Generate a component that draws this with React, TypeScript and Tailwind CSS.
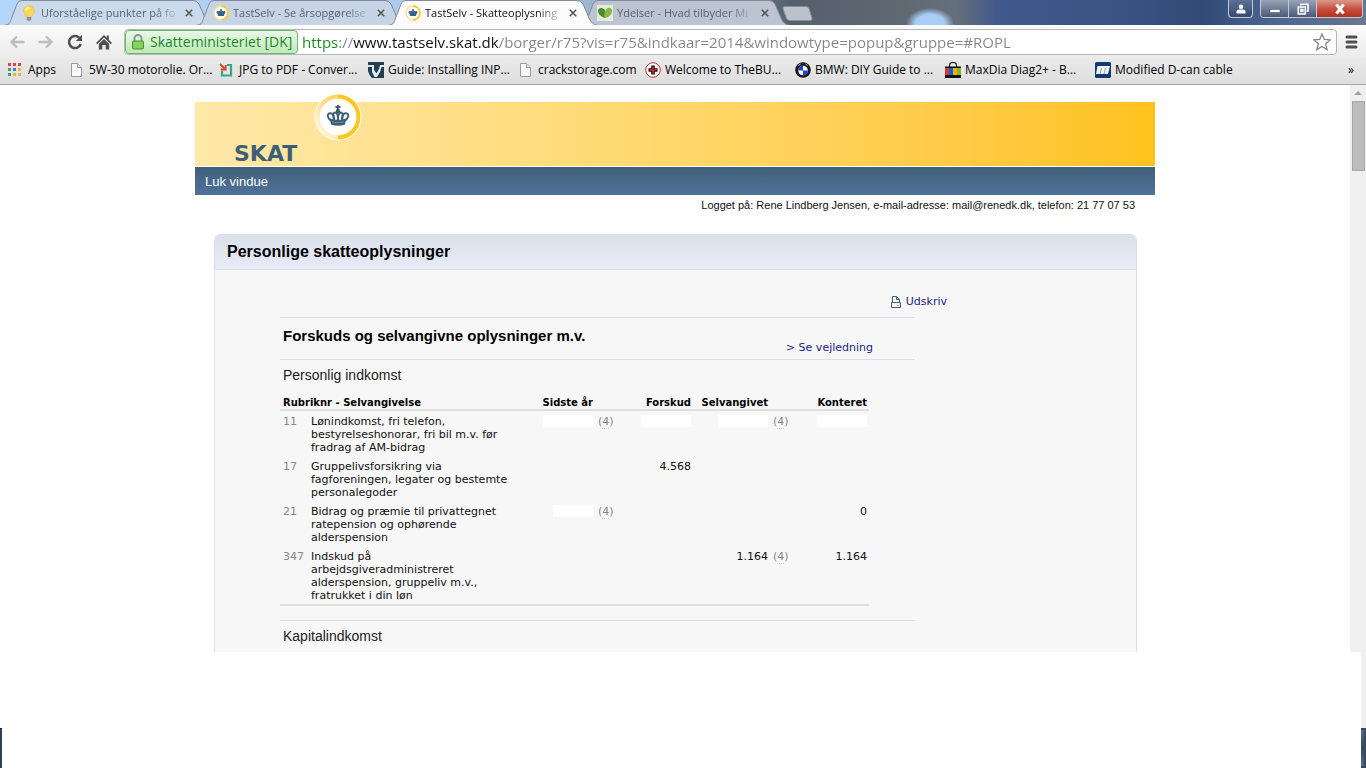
import type { ReactNode } from "react";
import clsx from "clsx";

function CrownIcon({ className }: { className?: string }) {
  return (
    <svg viewBox="0 0 24 21" className={className} fill="none" stroke="#3d5f78">
      <path d="M12 0v5M9.500 2h5" strokeWidth="1.800" />
      <circle cx="12" cy="6" r="2.200" fill="#3d5f78" stroke="none" />
      <path d="M5 16C1.500 13 .3 8.600 4 8.200c2.600-.2 4 2.300 3.800 6.300M19 16c3.500-3 4.700-7.400 1-7.800-2.600-.2-4 2.300-3.800 6.300" strokeWidth="1.900" />
      <path d="M8.200 15C6.800 11 7 7.500 9.300 7.500 11.200 7.500 12 10 12 15M15.800 15c1.400-4 1.200-7.500-1.100-7.500C12.800 7.500 12 10 12 15" strokeWidth="1.900" />
      <path d="M4 13.500c5 1.800 11 1.800 16 0l-1 6c-4.500 1.700-9.500 1.700-14 0z" fill="#3d5f78" stroke="none" />
      <path d="M6 16.800c4 1.100 8 1.100 12 0" stroke="#8fa5b4" strokeWidth=".5" />
    </svg>
  );
}

function SkatFavicon() {
  return (
    <svg viewBox="0 0 16 16" className="size-4 shrink-0">
      <circle cx="8" cy="8" r="7.500" fill="#fff" />
      <path d="M8 1a7 7 0 0 1 0 14" fill="none" stroke="#f4cb30" strokeWidth="1.800" />
      <path d="M8 15A7 7 0 0 1 8 1" fill="none" stroke="#f7e294" strokeWidth="1.400" />
      <path d="M7.300 4h1.400v1.400L10 6.300l1.800-.3c1.100.8.700 2-.5 3.200L11 11H5l-.3-1.800C3.500 8 3.100 6.800 4.200 6l1.800.3 1.300-.9z" fill="#3a638a" />
    </svg>
  );
}

function BulbFavicon() {
  return (
    <svg viewBox="0 0 16 16" className="size-4 shrink-0">
      <path d="M8 .5a5.500 5.500 0 0 0-5.500 5.300c0 2.700 2.500 3.700 3 6.200h5c.5-2.500 3-3.500 3-6.200A5.500 5.500 0 0 0 8 .5z" fill="#fbd65a" stroke="#e7b93a" strokeWidth=".6" />
      <path d="M5 5.500c.3-1.800 1.300-2.800 3-3" stroke="#fff3c2" strokeWidth="1.800" fill="none" />
      <path d="M5.800 12h4.400v2.600L9 15.700H7l-1.200-1.100z" fill="#8c9299" />
    </svg>
  );
}

function LeafFavicon() {
  return (
    <svg viewBox="0 0 16 16" className="size-4 shrink-0">
      <path fill="#e6ecdc" d="M0 0h16v16H0z" />
      <path d="M1 5.500C1.500 2.500 5 2 7.500 4.500 10 7 9.500 10.500 8 13 4.500 12 .5 9 1 5.500z" fill="#4c8c2b" />
      <path d="M15 5.500C14.500 2 11 2 9 4.500 7 7 7 10.500 8 13c4-.8 7.500-4 7-7.500z" fill="#86b93e" />
    </svg>
  );
}

function DocIcon() {
  return (
    <svg viewBox="0 0 16 16" className="size-4 shrink-0">
      <path d="M2.500 1.500h6l4 4v9h-10z" fill="#fafafa" stroke="#9a9a9a" />
      <path d="M8.500 1.500v4h4" fill="#e6e6e6" stroke="#9a9a9a" />
    </svg>
  );
}

const appColors = ["#d9483b", "#d9483b", "#d9483b", "#35a265", "#3f7de0", "#e9b92c", "#35a265", "#e9b92c", "#e9b92c"];

function AppsIcon() {
  return (
    <svg viewBox="0 0 16 16" className="size-4 shrink-0">
      {appColors.map((color, i) => (
        <rect key={i} x={(i % 3) * 5} y={1 + Math.floor(i / 3) * 5} width="3" height="3" fill={color} />
      ))}
    </svg>
  );
}

function PdfIcon() {
  return (
    <svg viewBox="0 0 16 16" className="size-4 shrink-0" fill="none">
      <path d="M8 3h4v10.500H3V9" stroke="#3ba585" strokeWidth="2.200" />
      <path d="M1 2l5 5M6.700 3v4.500h-5" stroke="#d5452b" strokeWidth="1.800" />
    </svg>
  );
}

function InpIcon() {
  return (
    <svg viewBox="0 0 16 16" className="size-4 shrink-0">
      <path fill="#1e3f54" d="M0 0h16v16H0z" />
      <path d="M0 3h6v5l2.500 3.500L11 7l1-4h4v2h-2.500l-1.500 5-3 5H6.500L4 10V5H0z" fill="#e8eef1" />
      <path d="M0 9c1 3 2 5 4 7H0z" fill="#dfe6ea" />
    </svg>
  );
}

function CrossIcon() {
  return (
    <svg viewBox="0 0 16 16" className="size-4 shrink-0">
      <circle cx="8" cy="8" r="7.300" fill="#fff" stroke="#d02a30" />
      <path d="M8 3.500v9M3.500 8h9" stroke="#111" strokeWidth="3.600" />
      <path d="M8 4.500v7M4.500 8h7" stroke="#d3262c" strokeWidth="1.600" />
    </svg>
  );
}

function BmwIcon() {
  return (
    <svg viewBox="0 0 16 16" className="size-4 shrink-0">
      <circle cx="8" cy="8" r="7.800" fill="#16181c" />
      <circle cx="8" cy="8.500" r="4.800" fill="#fff" />
      <path d="M8 8.500V3.700a4.800 4.800 0 0 0-4.800 4.800zM8 8.500v4.800a4.800 4.800 0 0 0 4.800-4.800z" fill="#1c3fe0" />
      <path d="M3.500 3.500l2-1.500M10.500 2l2 1.500" stroke="#ddd" />
    </svg>
  );
}

function BagIcon() {
  return (
    <svg viewBox="0 0 16 16" className="size-4 shrink-0">
      <path d="M4.500 5V3.500a3.500 3 0 0 1 7 0V5" fill="none" stroke="#111" strokeWidth="1.200" />
      <path fill="#111" d="M0 4.500h16v11.500H0z" />
      <path fill="#e53238" d="M0 6h4v7H0z" />
      <path fill="#0064d2" d="M4 6h4v7H4z" />
      <path fill="#f5af02" d="M8 6h4v7H8z" />
      <path fill="#86b817" d="M12 6h4v7h-4z" />
    </svg>
  );
}

function CableIcon() {
  return (
    <svg viewBox="0 0 16 16" className="size-4 shrink-0">
      <rect width="16" height="16" rx="1.500" fill="#143a6b" />
      <path d="M2.500 4h12.500l-2 8H1z" fill="#eef2f6" />
      <path d="M6.500 6l-1.500 6M10.500 6l-1.500 6" stroke="#8fa2ba" />
    </svg>
  );
}

const tabs: { title: string; icon: ReactNode; tone: string; active?: boolean }[] = [
  { title: "Uforståelige punkter på fo", icon: <BulbFavicon />, tone: "fill-[#cbdaea]" },
  { title: "TastSelv - Se årsopgørelse", icon: <SkatFavicon />, tone: "fill-[#c6d4e6]" },
  { title: "TastSelv - Skatteoplysning", icon: <SkatFavicon />, tone: "fill-[#fbfbfb]", active: true },
  { title: "Ydelser - Hvad tilbyder Mi", icon: <LeafFavicon />, tone: "fill-[#bcc4d2]" },
];

const bookmarks = [
  { label: "Apps", icon: <AppsIcon />, width: "w-[61px]" },
  { label: "5W-30 motorolie. Or...", icon: <DocIcon />, width: "w-[150px]" },
  { label: "JPG to PDF - Conver...", icon: <PdfIcon />, width: "w-[149px]" },
  { label: "Guide: Installing INP...", icon: <InpIcon />, width: "w-[150px]" },
  { label: "crackstorage.com", icon: <DocIcon />, width: "w-[127px]" },
  { label: "Welcome to TheBU...", icon: <CrossIcon />, width: "w-[150px]" },
  { label: "BMW: DIY Guide to ...", icon: <BmwIcon />, width: "w-[150px]" },
  { label: "MaxDia Diag2+ - B...", icon: <BagIcon />, width: "w-[150px]" },
  { label: "Modified D-can cable", icon: <CableIcon />, width: "w-[150px]" },
];

function Tab({ tab }: { tab: (typeof tabs)[number] }) {
  return (
    <div className={clsx("relative -mr-4 h-[25px] w-[208px] shrink", tab.active && "z-10")}>
      <svg viewBox="0 0 208 25" preserveAspectRatio="none" className="absolute inset-0 size-full">
        <path
          d="M0 25C5 25 5 22 7 17L12 4Q13 .5 17 .5H188Q192 .5 194 4L200 18Q203 25 208 25"
          className={tab.tone}
          stroke="#7f8b9b"
        />
      </svg>
      <div className="relative flex h-full items-center pr-4 pl-4">
        <button
          type="button"
          className={clsx(
            "flex min-w-0 flex-1 items-center gap-1 text-[11px] leading-4",
            tab.active ? "text-[#111]" : "text-[#5a6270]"
          )}
        >
          {tab.icon}
          <span className="whitespace-nowrap [mask-image:linear-gradient(to_right,#000_85%,#0004)]">{tab.title}</span>
        </button>
        <button type="button" aria-label="Luk fane" className="flex size-4 items-center justify-center">
          <svg viewBox="0 0 8 8" className="size-2" stroke="#555" strokeWidth="1.600">
            <path d="M.8.8l6.400 6.400M7.200.8L.8 7.200" />
          </svg>
        </button>
      </div>
    </div>
  );
}

function WindowButtons() {
  return (
    <div className="ml-auto flex items-start gap-[7px] pr-[3px]">
      <button type="button" aria-label="Bruger" className="flex h-[18px] w-[25px] items-center justify-center rounded-b border border-t-0 border-[#c3cad6] bg-linear-to-b from-[#5f7095] to-[#35486f]">
        <svg viewBox="0 0 10 10" className="size-[10px]" fill="#fff">
          <circle cx="5" cy="2.800" r="2.300" />
          <path d="M.5 9.500V7.500Q.5 5.500 3 5.500h4q2.500 0 2.500 2v2z" />
        </svg>
      </button>
      <div className="flex h-[18px] overflow-hidden rounded-b border border-t-0 border-[#c3cad6]">
        <button type="button" aria-label="Minimer" className="flex w-7 items-center justify-center border-r border-[#c3cad6] bg-linear-to-b from-[#9aa4b8] to-[#4c5a78]">
          <svg viewBox="0 0 12 12" className="size-3">
            <path d="M1 6.500h10v3H1z" fill="#fff" stroke="#444f66" strokeWidth=".5" />
          </svg>
        </button>
        <button type="button" aria-label="Gendan" className="flex w-7 items-center justify-center border-r border-[#c3cad6] bg-linear-to-b from-[#9aa4b8] to-[#4c5a78]">
          <svg viewBox="0 0 12 12" className="size-3" fill="none" stroke="#fff" strokeWidth="1.600">
            <path d="M4 2.500V1.300h7V8H9.500" />
            <path d="M1.300 4h7v7h-7zM4 6.500h1.800v2H4z" />
          </svg>
        </button>
        <button type="button" aria-label="Luk" className="flex w-[45px] items-center justify-center bg-linear-to-b from-[#d9998e] via-[#c8513f] to-[#b3301c]">
          <svg viewBox="0 0 12 12" className="size-3" stroke="#fff" strokeWidth="3">
            <path d="M2.500 1.500l7 9M9.500 1.500l-7 9" />
          </svg>
        </button>
      </div>
    </div>
  );
}

function BrowserChrome() {
  return (
    <header className="font-['Open_Sans',sans-serif]">
      <div className="flex h-[25px] bg-[radial-gradient(24px_16px_at_930px_24px,#a9cdf5_60%,transparent),linear-gradient(90deg,#b4d6f8_0%,#a9c6e6_40%,#56606d_58%,#5f6972_66%,#66707c_70%,#41588a_73%,#3b5383_82%,#334a78_88%,#4a648f_93%,#6a7790_100%)] pl-[5px]">
        <div className="flex">
          {tabs.map((tab) => (
            <Tab key={tab.title} tab={tab} />
          ))}
        </div>
        <button type="button" aria-label="Ny fane" className="mt-[6px] ml-[9px] h-[15px] w-[31px]">
          <svg viewBox="0 0 31 15" className="size-full">
            <path d="M2.500.5H24q2 0 3 2l3 9.500q.5 2.500-2 2.500H8q-2.500 0-3.500-2L1 3Q.5.5 2.500.5z" fill="#bcc2cb" stroke="#858d99" />
          </svg>
        </button>
        <WindowButtons />
      </div>

      <div className="flex h-[33px] items-center bg-linear-to-b from-[#fbfbfb] to-[#ebebeb] px-2">
        <nav className="flex items-center gap-[13px] pr-3 pl-[1px]">
          <button type="button" aria-label="Tilbage">
            <svg viewBox="0 0 16 16" className="size-4" fill="none" stroke="#bdbdbd" strokeWidth="2.400">
              <path d="M15.500 8H2.500M8 2.500L2.500 8 8 13.500" />
            </svg>
          </button>
          <button type="button" aria-label="Frem">
            <svg viewBox="0 0 16 16" className="size-4" fill="none" stroke="#bdbdbd" strokeWidth="2.400">
              <path d="M.5 8h13M8 2.500L13.500 8 8 13.500" />
            </svg>
          </button>
          <button type="button" aria-label="Genindlæs">
            <svg viewBox="0 0 16 16" className="size-4">
              <path d="M12.500 4A6 6 0 1 0 13.800 10" fill="none" stroke="#4f4f4f" strokeWidth="2.500" />
              <path d="M15 .8V7H8.800z" fill="#4f4f4f" />
            </svg>
          </button>
          <button type="button" aria-label="Startside">
            <svg viewBox="0 0 16 16" className="size-4" fill="#4f4f4f">
              <path d="M8 1l2.800 2.800V1.500h2v4.300L16 9l-1.200 1.200L8 3.600l-6.800 6.600L0 9z" />
              <path d="M2.800 10L8 5l5.200 5v5.500H9.700V11H6.300v4.500H2.800z" />
            </svg>
          </button>
        </nav>
        <div className="flex h-[26px] flex-1 items-center rounded-sm border border-[#b5b5b5] bg-white">
          <button type="button" className="flex h-6 w-[173px] shrink-0 items-center gap-[5px] rounded-sm border border-[#6cba6c] bg-linear-to-b from-[#e8f7e6] to-[#c2e8be] pl-[5px] text-[14px] leading-5 whitespace-nowrap text-[#188a1e]">
            <svg viewBox="0 0 14 16" className="h-4 w-[14px] shrink-0">
              <path d="M3.500 8V4.500a3.500 3.500 0 0 1 7 0V8" fill="none" stroke="#8f9a8f" strokeWidth="2" />
              <rect x="1.500" y="7" width="11" height="8" rx="1" fill="#77cc4e" stroke="#4c9a31" />
              <path d="M2.500 9h9M2.500 11h9M2.500 13h9" stroke="#a5e184" strokeWidth=".7" />
            </svg>
            Skatteministeriet [DK]
          </button>
          <input
            type="text"
            aria-label="Adresse"
            defaultValue="https://www.tastselv.skat.dk/borger/r75?vis=r75&indkaar=2014&windowtype=popup&gruppe=#ROPL"
            className="ml-1 h-6 min-w-0 flex-1 bg-linear-[90deg,#188a1e_37px,#858585_37px_51px,#111_51px_197px,#858585_197px] bg-clip-text text-[15px] leading-5 text-transparent outline-none"
          />
          <button type="button" aria-label="Bogmærk" className="mr-[5px]">
            <svg viewBox="0 0 18 18" className="size-[18px]" fill="#fff" stroke="#838383" strokeWidth="1.300">
              <path d="M9 1l2.300 5.500 5.900.4-4.500 3.900 1.400 5.800L9 13.500l-5.100 3.100 1.400-5.800L.8 6.900l5.900-.4z" />
            </svg>
          </button>
        </div>
        <button type="button" aria-label="Menu" className="ml-2">
          <svg viewBox="0 0 13 14" className="h-[14px] w-[13px]" stroke="#505050" strokeWidth="3" strokeLinecap="round">
            <path d="M2 2h9M2 7h9M2 12h9" />
          </svg>
        </button>
      </div>

      <div className="flex h-[27px] items-center overflow-hidden border-b border-[#a5a5a5] bg-linear-to-b from-[#eaeaea] to-[#dedede] px-2 pb-[2px] text-[12px] leading-4 whitespace-nowrap text-black">
        {bookmarks.map((bookmark) => (
          <a key={bookmark.label} href="#" className={clsx("flex shrink-0 items-center gap-1", bookmark.width)}>
            {bookmark.icon}
            {bookmark.label}
          </a>
        ))}
        <button type="button" aria-label="Flere bogmærker" className="ml-auto pr-1">»</button>
      </div>
    </header>
  );
}

function SkatBanner() {
  return (
    <div className="relative flex h-16 items-end bg-linear-to-r from-[#ffe9a8] via-[#ffd76a] to-[#ffc21c] pl-[39px]">
      <svg viewBox="0 0 48 48" className="absolute -top-[9px] left-[119px] size-12" fill="none">
        <defs>
          <linearGradient id="ring" x1="0" y1="1" x2=".6" y2="0">
            <stop offset="0" stopColor="#fffdf3" />
            <stop offset="1" stopColor="#fcd563" />
          </linearGradient>
        </defs>
        <circle cx="24" cy="24" r="23.500" fill="#fff" />
        <circle cx="24" cy="24" r="22.500" fill="#fdf1c9" />
        <circle cx="24" cy="24" r="18.500" fill="#fff" />
        <path d="M24 44.500A20.500 20.500 0 0 1 24 3.500" stroke="url(#ring)" strokeWidth="4" />
        <path d="M24 3.500a20.500 20.500 0 0 1 0 41" stroke="#f9c623" strokeWidth="4" />
      </svg>
      <CrownIcon className="absolute top-[3px] left-[131px] h-[21px] w-6" />
      <span className="font-['DejaVu_Sans',sans-serif] text-[22px] leading-6 font-bold text-[#3d5f78]">SKAT</span>
    </div>
  );
}

// "x" and "xs" mark figures that are blanked out
const rows = [
  {
    nr: "11",
    text: "Lønindkomst, fri telefon, bestyrelseshonorar, fri bil m.v. før fradrag af AM-bidrag",
    values: ["x", "x", "x", "x"],
    notes: [true, true],
  },
  {
    nr: "17",
    text: "Gruppelivsforsikring via fagforeningen, legater og bestemte personalegoder",
    values: ["", "4.568", "", ""],
    notes: [false, false],
  },
  {
    nr: "21",
    text: "Bidrag og præmie til privattegnet ratepension og ophørende alderspension",
    values: ["xs", "", "", "0"],
    notes: [true, false],
  },
  {
    nr: "347",
    text: "Indskud på arbejdsgiveradministreret alderspension, gruppeliv m.v., fratrukket i din løn",
    values: ["", "", "1.164", "1.164"],
    notes: [false, true],
  },
];

function Value({ value }: { value: string }) {
  if (value === "x") return <span className="inline-block h-3 w-[50px] bg-white align-top" />;
  if (value === "xs") return <span className="inline-block h-3 w-10 bg-white align-top" />;
  return <>{value}</>;
}

function Note({ show }: { show: boolean }) {
  return (
    <td className="pl-[5px] text-[#888]">
      {show && (
        <>
          (<a href="#" className="border-b border-dotted border-[#ccc]">4</a>)
        </>
      )}
    </td>
  );
}

function IncomeTable() {
  return (
    <table className="w-[589px] table-fixed border-b-2 border-[#dedfe0] text-[11px] leading-[13px] text-[#111]">
      <colgroup>
        <col className="w-[31px]" />
        <col className="w-[205px]" />
        <col className="w-[77px]" />
        <col className="w-[25px]" />
        <col className="w-[73px]" />
        <col className="w-[77px]" />
        <col className="w-[25px]" />
        <col className="w-[76px]" />
      </colgroup>
      <thead>
        <tr className="h-[17px] border-b-2 border-[#dedfe0] text-right align-bottom text-[10px] whitespace-nowrap text-black">
          <th colSpan={2} className="pl-[3px] text-left">Rubriknr - Selvangivelse</th>
          <th>Sidste år</th>
          <th />
          <th>Forskud</th>
          <th>Selvangivet</th>
          <th />
          <th className="pr-[2px]">Konteret</th>
        </tr>
      </thead>
      <tbody>
        {rows.map((row) => (
          <tr key={row.nr} className="align-top *:pt-1 *:pb-[2px]">
            <td className="pl-[3px] text-[#888]">{row.nr}</td>
            <td>{row.text}</td>
            <td className="text-right"><Value value={row.values[0]} /></td>
            <Note show={row.notes[0]} />
            <td className="text-right"><Value value={row.values[1]} /></td>
            <td className="text-right"><Value value={row.values[2]} /></td>
            <Note show={row.notes[1]} />
            <td className="pr-[2px] text-right"><Value value={row.values[3]} /></td>
          </tr>
        ))}
      </tbody>
    </table>
  );
}

function TaxPage() {
  return (
    <main className="min-w-0 flex-1 bg-white pt-[17px] font-['Liberation_Sans',Arial,sans-serif] text-black">
      <div className="mx-auto max-w-[960px]">
        <SkatBanner />
        <nav className="mt-px flex h-7 items-center bg-linear-to-b from-[#41607a] to-[#4f7298] px-[10px] pt-px text-[13px] text-white">
          <a href="#">Luk vindue</a>
        </nav>
        <p className="pt-1 pr-5 text-right text-[11px] leading-3 text-[#111]">
          Logget på: Rene Lindberg Jensen, e-mail-adresse: mail@renedk.dk, telefon: 21 77 07 53
        </p>

        <section className="mt-[23px] mr-[18px] ml-[19px] rounded-t-md border border-b-0 border-[#dcdfe6] bg-[#f7f7f7]">
          <h1 className="flex h-[35px] items-center rounded-t-md border-b border-[#dcdfe6] bg-linear-to-b from-[#dae1e9] to-[#e8ebf7] px-3 text-[16px] font-bold">
            Personlige skatteoplysninger
          </h1>
          <div className="ml-[65px] max-w-[667px] pt-6 font-['DejaVu_Sans',Verdana,sans-serif]">
            <div className="flex justify-end text-[11px] leading-4 text-[#1c1c86]">
              <a href="#" className="flex items-center gap-1">
                <svg viewBox="0 0 11 12" className="h-3 w-[11px]" fill="none" stroke="#3e6273">
                  <path d="M1.500 6.500v-6h4l3 3v3M5.500.5v3h3M.5 6.500h9v5h-9zM6.500 9.500h1" />
                </svg>
                Udskriv
              </a>
            </div>
            <div className="mr-8">
              <div className="mt-[7px] flex h-[42px] justify-between border-t border-[#dcdfe3] pr-[42px] pl-[3px]">
                <h2 className="pt-2 font-['Liberation_Sans',Arial,sans-serif] text-[15px] leading-5 font-bold">
                  Forskuds og selvangivne oplysninger m.v.
                </h2>
                <a href="#" className="pt-[22px] text-[11px] leading-4 text-[#1c1c86]">&gt; Se vejledning</a>
              </div>
              <h3 className="border-t border-[#dcdfe3] pt-[5px] pl-[3px] font-['Liberation_Sans',Arial,sans-serif] text-[14px] leading-5 text-[#222]">
                Personlig indkomst
              </h3>
              <div className="pt-2">
                <IncomeTable />
              </div>
              <h3 className="mt-[14px] border-t border-[#dcdfe3] pt-[5px] pb-[6px] pl-[3px] font-['Liberation_Sans',Arial,sans-serif] text-[14px] leading-5 text-[#222]">
                Kapitalindkomst
              </h3>
            </div>
          </div>
        </section>
      </div>
    </main>
  );
}

export default function App() {
  return (
    <div className="flex min-h-screen flex-col bg-white">
      <BrowserChrome />
      <div className="flex">
        <TaxPage />
        {/* Scrollbar */}
        <div className="flex w-4 flex-col items-center bg-[#f0f0f0]">
          <div className="flex h-4 items-center">
            <svg viewBox="0 0 8 4" className="h-1 w-2" fill="#a0a0a0">
              <path d="M4 0l4 4H0z" />
            </svg>
          </div>
          <div className="h-[70px] w-[13px] border border-[#a8a8a8] bg-[#bcbcbc]" />
        </div>
      </div>
      {/* Window edges below the page */}
      <div className="flex flex-1 justify-between">
        <div className="flex w-[2px] flex-col justify-end">
          <div className="h-10 border-t border-[#1c2433] bg-[#2c3f61]" />
        </div>
        <div className="flex w-[5px] flex-col bg-[#f0f0f0]">
          <div className="mt-auto h-10 border-2 border-l-0 border-[#3b4a60] bg-linear-to-b from-[#5a6a80] via-[#36455f] to-[#566a98]" />
        </div>
      </div>
    </div>
  );
}
